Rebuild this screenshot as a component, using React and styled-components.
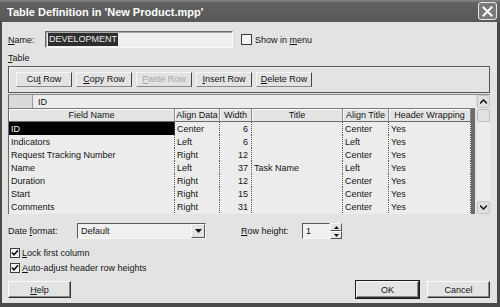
import styled, { createGlobalStyle } from 'styled-components';

const rows = [
    { field: 'ID', align: 'Center', width: 6, title: '', alignTitle: 'Center', wrap: 'Yes' },
    { field: 'Indicators', align: 'Left', width: 6, title: '', alignTitle: 'Left', wrap: 'Yes' },
    { field: 'Request Tracking Number', align: 'Right', width: 12, title: '', alignTitle: 'Center', wrap: 'Yes' },
    { field: 'Name', align: 'Left', width: 37, title: 'Task Name', alignTitle: 'Left', wrap: 'Yes' },
    { field: 'Duration', align: 'Right', width: 12, title: '', alignTitle: 'Center', wrap: 'Yes' },
    { field: 'Start', align: 'Right', width: 15, title: '', alignTitle: 'Center', wrap: 'Yes' },
    { field: 'Comments', align: 'Right', width: 31, title: '', alignTitle: 'Center', wrap: 'Yes' },
];

const headers = ['Field Name', 'Align Data', 'Width', 'Title', 'Align Title', 'Header Wrapping'];

export default function App() {
    return (
        <>
            <Global />
            <Window>
                <TitleBar>
                    <Caption>Table Definition in 'New Product.mpp'</Caption>
                    <CloseBtn>
                        <svg width="11" height="11" viewBox="0 0 11 11">
                            <path d="M1.5 1.5 L9.5 9.5 M9.5 1.5 L1.5 9.5" stroke="#fff" strokeWidth="2" strokeLinecap="square" />
                        </svg>
                    </CloseBtn>
                </TitleBar>
                <Body>
                    <NameRow>
                        <Label $w={37}><U>N</U>ame:</Label>
                        <TextBox $w={188}><Selected>DEVELOPMENT</Selected></TextBox>
                        <CheckLine $ml={8}>
                            <CheckBox />
                            <span>Show in <U>m</U>enu</span>
                        </CheckLine>
                    </NameRow>
                    <SectionLabel><U>T</U>able</SectionLabel>
                    <GroupBox>
                        <ToolButton><span>Cu<U>t</U> Row</span></ToolButton>
                        <ToolButton><span><U>C</U>opy Row</span></ToolButton>
                        <ToolButton $disabled><span><U>P</U>aste Row</span></ToolButton>
                        <ToolButton><span><U>I</U>nsert Row</span></ToolButton>
                        <ToolButton><span><U>D</U>elete Row</span></ToolButton>
                    </GroupBox>
                    <GridFrame>
                        <TableArea>
                            <EditRow>
                                <EditStub />
                                <EditField>ID</EditField>
                            </EditRow>
                            <HeadRow>
                                {headers.map(h => <HeadCell key={h}>{h}</HeadCell>)}
                                <Filler />
                            </HeadRow>
                            {rows.map((r, i) => (
                                <Row key={r.field} r={r} selected={i === 0} />
                            ))}
                            <RowGap>
                                <Filler />
                            </RowGap>
                        </TableArea>
                        <Scrollbar>
                            <ScrollBtn>
                                <svg width="7" height="5" viewBox="0 0 7 5"><path d="M0 4.5 L3.5 1 L7 4.5" stroke="#222" strokeWidth="1.6" fill="none" /></svg>
                            </ScrollBtn>
                            <Thumb />
                            <Track />
                            <ScrollBtn>
                                <svg width="7" height="5" viewBox="0 0 7 5"><path d="M0 0.5 L3.5 4 L7 0.5" stroke="#222" strokeWidth="1.6" fill="none" /></svg>
                            </ScrollBtn>
                        </Scrollbar>
                    </GridFrame>
                    <OptionsRow>
                        <Label $w={69}>Date <U>f</U>ormat:</Label>
                        <Combo>
                            <span>Default</span>
                            <ComboArrow>
                                <svg width="7" height="4" viewBox="0 0 7 4"><path d="M0 0 L7 0 L3.5 4 Z" fill="#111" /></svg>
                            </ComboArrow>
                        </Combo>
                        <Label $w={61} $ml={35}><U>R</U>ow height:</Label>
                        <Spinner>
                            <SpinText>1</SpinText>
                            <SpinBtns>
                                <SpinBtn>
                                    <svg width="5" height="3" viewBox="0 0 5 3"><path d="M0 3 L2.5 0 L5 3 Z" fill="#111" /></svg>
                                </SpinBtn>
                                <SpinBtn>
                                    <svg width="5" height="3" viewBox="0 0 5 3"><path d="M0 0 L5 0 L2.5 3 Z" fill="#111" /></svg>
                                </SpinBtn>
                            </SpinBtns>
                        </Spinner>
                    </OptionsRow>
                    <Checks>
                        <CheckLine>
                            <CheckBox checked />
                            <span><U>L</U>ock first column</span>
                        </CheckLine>
                        <CheckLine>
                            <CheckBox checked />
                            <span><U>A</U>uto-adjust header row heights</span>
                        </CheckLine>
                    </Checks>
                    <Footer>
                        <DialogButton><span><U>H</U>elp</span></DialogButton>
                        <Spacer />
                        <DialogButton $default>OK</DialogButton>
                        <DialogButton>Cancel</DialogButton>
                    </Footer>
                </Body>
            </Window>
        </>
    )
}

function Row({ r, selected }) {
    return (
        <DataRow>
            <Cell $selected={selected}>{r.field}</Cell>
            <Cell>{r.align}</Cell>
            <Cell $right>{r.width}</Cell>
            <Cell>{r.title}</Cell>
            <Cell>{r.alignTitle}</Cell>
            <Cell>{r.wrap}</Cell>
            <Filler />
        </DataRow>
    )
}

function CheckBox({ checked }) {
    return (
        <Box>
            {checked && (
                <svg width="8" height="8" viewBox="0 0 8 8">
                    <path d="M1 3.5 L3 5.8 L7 1.3" stroke="#111" strokeWidth="1.7" fill="none" />
                </svg>
            )}
        </Box>
    )
}

const Global = createGlobalStyle`
    body {
        margin: 0;
        background: #e3e3e3;
        font-family: 'Liberation Sans', Arial, sans-serif;
        font-size: 9px;
        color: #141414;
    }
`

const Window = styled.div`
    width: 500px;
    height: 307px;
    display: flex;
    flex-direction: column;
    overflow: hidden;
`

const TitleBar = styled.div`
    height: 22px;
    display: flex;
    align-items: center;
    padding: 0 3px 0 7px;
    background: linear-gradient(#858585 0, #626262 3px, #575757 100%);
`

const Caption = styled.div`
    flex: 1;
    color: #fff;
    font-weight: bold;
    font-size: 11px;
    padding-top: 1px;
`

const CloseBtn = styled.div`
    width: 17px;
    height: 16px;
    display: flex;
    align-items: center;
    justify-content: center;
    border: 1px solid #e8e8e8;
    border-radius: 3px;
    background: #7a7a7a;
`

const Body = styled.div`
    flex: 1;
    display: flex;
    flex-direction: column;
    padding: 0 7px 0 6px;
    border-left: 2px solid #4a4a4a;
    border-right: 3px solid #4a4a4a;
    border-bottom: 4px solid #4a4a4a;
    background: #e3e3e3;
`

const U = styled.span`
    text-decoration: underline;
`

const NameRow = styled.div`
    display: flex;
    align-items: center;
    margin-top: 9px;
    height: 17px;
`

const Label = styled.div`
    width: ${p => p.$w}px;
    margin-left: ${p => p.$ml || 0}px;
    flex-shrink: 0;
`

const TextBox = styled.div`
    width: ${p => p.$w}px;
    height: 17px;
    box-sizing: border-box;
    display: flex;
    align-items: center;
    padding-left: 2px;
    background: #efefef;
    border: 1px solid;
    border-color: #6a6a6a #f8f8f8 #f8f8f8 #6a6a6a;
    box-shadow: inset 1px 1px 0 #a8a8a8;
`

const Selected = styled.span`
    background: #2e2e2e;
    color: #e8e8e8;
    padding: 1px 1px;
    line-height: 11px;
`

const CheckLine = styled.div`
    display: flex;
    align-items: center;
    gap: 3px;
    margin-left: ${p => p.$ml || 0}px;
    height: 15px;
`

const Box = styled.div`
    width: 11px;
    height: 11px;
    box-sizing: border-box;
    border: 1px solid #3c3c3c;
    background: #f4f4f4;
    display: flex;
    align-items: center;
    justify-content: center;
`

const SectionLabel = styled.div`
    margin-top: 4px;
    height: 13px;
    line-height: 13px;
`

const GroupBox = styled.div`
    margin-top: 1px;
    height: 27px;
    box-sizing: border-box;
    display: flex;
    align-items: center;
    gap: 4px;
    padding: 0 0 1px 7px;
    border: 1px solid #555;
    box-shadow: inset 1px 1px 0 #f4f4f4;
`

const ToolButton = styled.div`
    width: 56px;
    height: 15px;
    box-sizing: border-box;
    display: flex;
    align-items: center;
    justify-content: center;
    border: 1px solid;
    border-color: #f6f6f6 #444 #8a8a8a #f6f6f6;
    color: ${p => p.$disabled ? '#a6a6a6' : '#141414'};
    background: #e3e3e3;
`

const GridFrame = styled.div`
    margin-top: 1px;
    height: 119px;
    display: flex;
    gap: 2px;
    border-top: 1px solid #8a8a8a;
`

const TableArea = styled.div`
    flex: 1;
    display: flex;
    flex-direction: column;
    overflow: hidden;
    background: #ececec;
    border-left: 1px solid #6a6a6a;
`

const EditRow = styled.div`
    height: 13px;
    flex-shrink: 0;
    display: flex;
    border-bottom: 1px solid #7a7a7a;
`

const EditStub = styled.div`
    width: 23px;
    background: #dadada;
    border-right: 1px solid #9a9a9a;
`

const EditField = styled.div`
    flex: 1;
    padding-left: 5px;
    display: flex;
    align-items: center;
    background: #ececec;
`

const columns = '166px 45px 32px 91px 46px 82px 1fr';

const HeadRow = styled.div`
    display: grid;
    grid-template-columns: ${columns};
    height: 13px;
    flex-shrink: 0;
`

const DataRow = styled.div`
    display: grid;
    grid-template-columns: ${columns};
    height: 13px;
    flex-shrink: 0;
`

const RowGap = styled.div`
    flex: 1;
    display: grid;
    grid-template-columns: ${columns};
    & > div { grid-column: 7; }
`

const HeadCell = styled.div`
    display: flex;
    align-items: center;
    justify-content: center;
    background: #e4e4e4;
    border-right: 1px solid #8a8a8a;
    border-bottom: 1px solid #6a6a6a;
    box-shadow: inset 1px 1px 0 #fafafa;
    white-space: nowrap;
`

const Cell = styled.div`
    display: flex;
    align-items: center;
    justify-content: ${p => p.$right ? 'flex-end' : 'flex-start'};
    padding: 0 3px 0 2px;
    overflow: hidden;
    white-space: nowrap;
    border-right: 1px dotted #5a5a5a;
    background: ${p => p.$selected ? '#000' : 'transparent'};
    color: ${p => p.$selected ? '#f4f4f4' : '#141414'};
`

const Filler = styled.div`
    background: #6c6c6c;
`

const Scrollbar = styled.div`
    width: 13px;
    display: flex;
    flex-direction: column;
    background: #ededed;
`

const ScrollBtn = styled.div`
    height: 13px;
    display: flex;
    align-items: center;
    justify-content: center;
    background: #e0e0e0;
    border: 1px solid #c4c4c4;
    box-sizing: border-box;
    border-radius: 2px;
`

const Thumb = styled.div`
    height: 11px;
    margin: 1px 0;
    background: #e2e2e2;
    border: 1px solid #bdbdbd;
    border-radius: 2px;
`

const Track = styled.div`
    flex: 1;
`

const OptionsRow = styled.div`
    display: flex;
    align-items: center;
    margin-top: 9px;
    height: 16px;
`

const Combo = styled.div`
    width: 129px;
    height: 16px;
    box-sizing: border-box;
    display: flex;
    align-items: center;
    padding-left: 3px;
    background: #f0f0f0;
    border: 1px solid;
    border-color: #5a5a5a #f8f8f8 #f8f8f8 #5a5a5a;
    span { flex: 1; }
`

const ComboArrow = styled.div`
    width: 14px;
    height: 14px;
    box-sizing: border-box;
    display: flex;
    align-items: center;
    justify-content: center;
    background: #e4e4e4;
    border: 1px solid;
    border-color: #f8f8f8 #555 #555 #f8f8f8;
`

const Spinner = styled.div`
    display: flex;
    height: 16px;
`

const SpinText = styled.div`
    width: 28px;
    box-sizing: border-box;
    padding-left: 3px;
    display: flex;
    align-items: center;
    background: #f0f0f0;
    border: 1px solid;
    border-color: #5a5a5a transparent #f8f8f8 #5a5a5a;
`

const SpinBtns = styled.div`
    width: 12px;
    display: flex;
    flex-direction: column;
`

const SpinBtn = styled.div`
    flex: 1;
    display: flex;
    align-items: center;
    justify-content: center;
    background: #e4e4e4;
    border: 1px solid;
    border-color: #f8f8f8 #555 #555 #f8f8f8;
`

const Checks = styled.div`
    display: flex;
    flex-direction: column;
    margin-top: 6px;
    padding-left: 2px;
    & > div { gap: 2px; }
    & ${Box} { width: 10px; height: 10px; }
`

const Footer = styled.div`
    display: flex;
    align-items: center;
    gap: 7px;
    margin-top: auto;
    margin-bottom: 5px;
`

const Spacer = styled.div`
    flex: 1;
`

const DialogButton = styled.div`
    width: 63px;
    height: 17px;
    box-sizing: border-box;
    display: flex;
    align-items: center;
    justify-content: center;
    background: #e3e3e3;
    border: 1px solid;
    border-color: #fafafa #303030 #303030 #fafafa;
    box-shadow: ${p => p.$default ? '0 0 0 1px #1a1a1a, inset -1px -1px 0 #8a8a8a' : 'inset -1px -1px 0 #8a8a8a'};
    margin-right: ${p => p.$default ? '1px' : '0'};
`
